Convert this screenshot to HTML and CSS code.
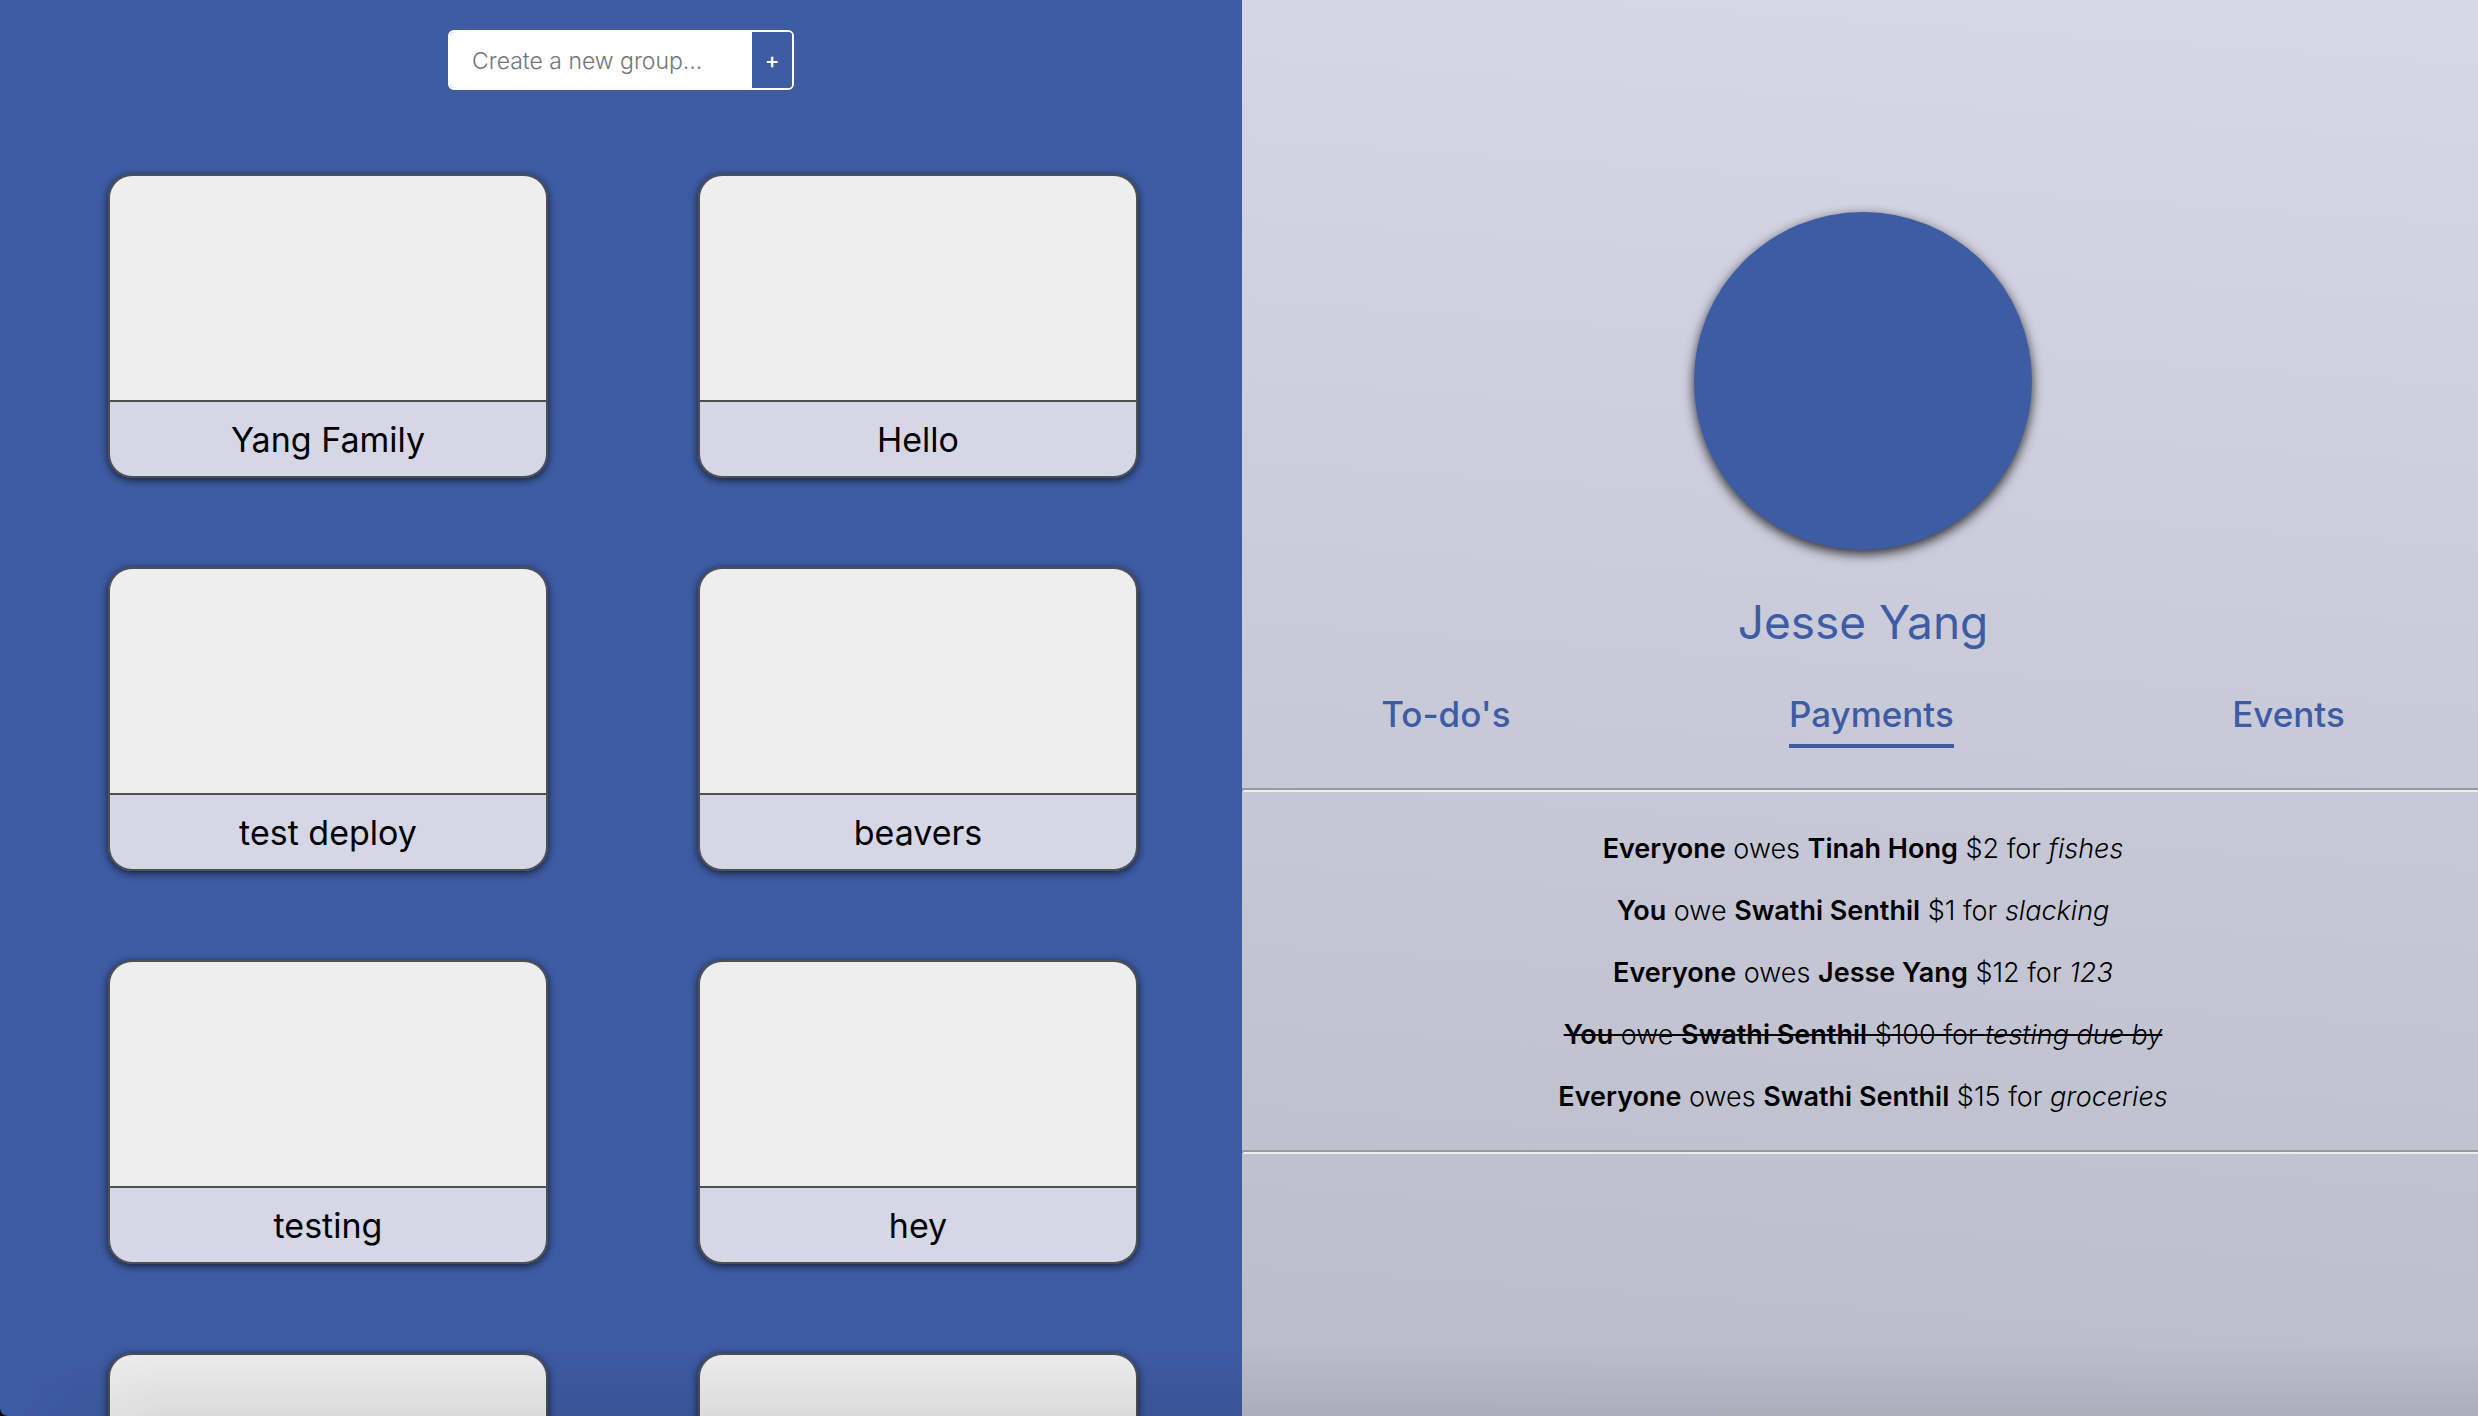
FILE: index.html
```html
<!DOCTYPE html>
<html lang="en">
<head>
<meta charset="utf-8">
<title>Groups</title>
<link rel="stylesheet" href="styles.css">
</head>
<body>
<div class="app">
  <main class="groups">
    <form class="create">
      <input class="create-input" type="text" placeholder="Create a new group..." aria-label="Create a new group">
      <button class="create-button" type="button" aria-label="Add group">+</button>
    </form>
    <div class="grid">
      <a class="card" href="#"><span class="card-picture"></span><span class="card-name">Yang Family</span></a>
      <a class="card" href="#"><span class="card-picture"></span><span class="card-name">Hello</span></a>
      <a class="card" href="#"><span class="card-picture"></span><span class="card-name">test deploy</span></a>
      <a class="card" href="#"><span class="card-picture"></span><span class="card-name">beavers</span></a>
      <a class="card" href="#"><span class="card-picture"></span><span class="card-name">testing</span></a>
      <a class="card" href="#"><span class="card-picture"></span><span class="card-name">hey</span></a>
      <a class="card" href="#"><span class="card-picture"></span><span class="card-name"></span></a>
      <a class="card" href="#"><span class="card-picture"></span><span class="card-name"></span></a>
    </div>
  </main>
  <aside class="profile">
    <div class="avatar"></div>
    <h1 class="name">Jesse Yang</h1>
    <nav class="tabs">
      <button class="tab" type="button">To-do's</button>
      <button class="tab tab-active" type="button">Payments</button>
      <button class="tab" type="button">Events</button>
    </nav>
    <hr class="rule">
    <ul class="payments">
      <li><b>Everyone</b> owes <b>Tinah Hong</b> $2 for <i>fishes</i></li>
      <li><b>You</b> owe <b>Swathi Senthil</b> $1 for <i>slacking</i></li>
      <li><b>Everyone</b> owes <b>Jesse Yang</b> $12 for <i>123</i></li>
      <li class="paid"><b>You</b> owe <b>Swathi Senthil</b> $100 for <i>testing due by</i></li>
      <li><b>Everyone</b> owes <b>Swathi Senthil</b> $15 for <i>groceries</i></li>
    </ul>
    <hr class="rule">
  </aside>
</div>
<div class="shade"></div>
</body>
</html>
```
FILE: styles.css
```css
* {
  box-sizing: border-box;
}

html {
  background: #000;
}

body {
  margin: 0;
  height: 100vh;
  overflow: hidden;
  font-family: Inter, "Liberation Sans", sans-serif;
  color: #000;
}

/* Slightly wider than the window, so the profile runs under its edge */
.app {
  display: grid;
  grid-template-columns: 1fr 1fr;
  width: calc(100% + 6px);
  height: 100%;
}

.groups {
  min-width: 0;
  padding: 30px 0 0;
  background: #3e5ca4;
  border-bottom-left-radius: 8px;
  overflow: hidden;
}

.create {
  display: flex;
  width: 346px;
  height: 60px;
  margin: 0 auto 84px;
  border: 2px solid #fff;
  border-radius: 6px;
  overflow: hidden;
}

.create-input {
  flex: 1;
  min-width: 0;
  padding: 2px 22px 0;
  border: 0;
  outline: 0;
  background: #fff;
  font: 300 23px/54px Inter, "Liberation Sans", sans-serif;
}

.create-input::placeholder {
  color: #757575;
}

.create-button {
  width: 40px;
  padding: 0;
  border: 0;
  background: #3e5ca4;
  color: #fff;
  font: 500 22px/54px Inter, "Liberation Sans", sans-serif;
}

.grid {
  display: grid;
  grid-template-columns: 1fr 1fr;
  gap: 89px 150px;
  padding: 0 104px 0 108px;
}

.card {
  display: flex;
  flex-direction: column;
  border: 2px solid #4f4f4f;
  border-radius: 24px;
  overflow: hidden;
  box-shadow: 0 2px 8px rgba(0, 0, 0, 0.7);
  color: inherit;
  text-decoration: none;
}

.card-picture {
  height: 224px;
  background: #eee;
}

.card-name {
  height: 76px;
  border-top: 2px solid #4f4f4f;
  background: #d5d7e6;
  font-size: 34px;
  line-height: 76px;
  text-align: center;
}

.profile {
  min-width: 0;
  padding-top: 212px;
  background: linear-gradient(184deg, #d6d8e7, #bbbcca);
}

.avatar {
  width: 338px;
  height: 338px;
  margin: 0 auto;
  border-radius: 50%;
  background: #3e5ca4;
  box-shadow: 0 4px 12px rgba(0, 0, 0, 0.8);
}

.name {
  margin: 39px 0 31px;
  color: #3e5ca4;
  font-size: 46px;
  font-weight: 400;
  line-height: 66px;
  text-align: center;
}

.tabs {
  display: flex;
  justify-content: space-around;
  margin-bottom: 40px;
}

.tab {
  padding: 0 0 2px;
  border: 0;
  border-bottom: 4px solid transparent;
  background: none;
  color: #3e5ca4;
  font: 500 35px/56px Inter, "Liberation Sans", sans-serif;
}

.tab-active {
  border-bottom-color: #3e5ca4;
}

.rule {
  margin: 0;
  border: 2px inset #eee;
}

.payments {
  margin: 0;
  padding: 26px 0 22px;
  list-style: none;
  font-size: 27px;
  font-weight: 300;
  line-height: 62px;
  text-align: center;
}

.payments b {
  font-weight: 600;
}

.paid {
  text-decoration: line-through;
}

/* Soft darkening along the bottom of the window */
.shade {
  position: absolute;
  right: 0;
  bottom: 0;
  left: 0;
  height: 72px;
  background: linear-gradient(transparent, rgba(0, 0, 0, 0.08));
  mask-image: linear-gradient(to right, transparent, #000 160px);
  pointer-events: none;
}
```
